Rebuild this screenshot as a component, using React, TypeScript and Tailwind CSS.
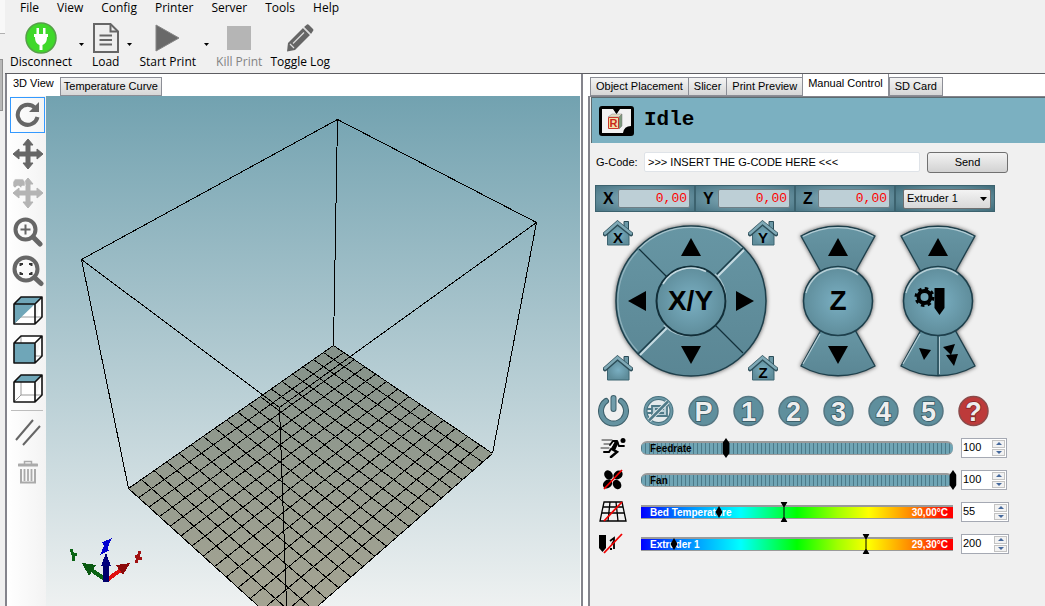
import React, { FC, ReactNode, useState } from "react";

const menus = ["File", "View", "Config", "Printer", "Server", "Tools", "Help"];

const rightTabs = ["Object Placement", "Slicer", "Print Preview", "Manual Control", "SD Card"];

// Corners of the print bed and of the top of the build volume, in viewport pixels
const bed = { back: [287.5, 249.5], right: [446.5, 357.5], front: [241.5, 536.5], left: [82.5, 392.5] };
const top = { back: [291.5, 23.5], right: [490.5, 126.5], front: [233.5, 311.5], left: [35.5, 163.5] };

// Perspective mapping of the unit square to the bed
const project = (u: number, v: number): [number, number] => {
  const [x0, y0] = bed.back;
  const [x1, y1] = bed.right;
  const [x2, y2] = bed.front;
  const [x3, y3] = bed.left;
  const dx1 = x1 - x2, dy1 = y1 - y2;
  const dx2 = x3 - x2, dy2 = y3 - y2;
  const sx = x0 - x1 + x2 - x3, sy = y0 - y1 + y2 - y3;
  const det = dx1 * dy2 - dx2 * dy1;
  const g = (sx * dy2 - dx2 * sy) / det;
  const h = (dx1 * sy - sx * dy1) / det;
  const w = g * u + h * v + 1;
  return [
    ((x1 - x0 + g * x1) * u + (x3 - x0 + h * x3) * v + x0) / w,
    ((y1 - y0 + g * y1) * u + (y3 - y0 + h * y3) * v + y0) / w,
  ];
};

const gridPath = () => {
  const parts: string[] = [];
  for (let i = 0; i <= 14; i++) {
    parts.push(`M${project(i / 14, 0)} L${project(i / 14, 1)}`);
  }
  for (let i = 0; i <= 18; i++) {
    parts.push(`M${project(0, i / 18)} L${project(1, i / 18)}`);
  }
  return parts.join(" ");
};

const Viewport: FC = () => (
  <div className="min-w-0 flex-1 overflow-hidden bg-linear-to-b from-[#72a2b0] to-[#eef1f1]">
    <svg className="block h-[510px] w-full" role="img" aria-label="Build volume">
      <defs>
        <linearGradient id="bedFill" x1="0" y1="0" x2="0" y2="1">
          <stop offset="0" stopColor="#85928a" />
          <stop offset="1" stopColor="#a8a694" />
        </linearGradient>
      </defs>
      <polygon points={`${bed.back} ${bed.right} ${bed.front} ${bed.left}`} fill="url(#bedFill)" />
      <g stroke="#000" fill="none" shapeRendering="crispEdges">
        <path d={gridPath()} />
        <polygon points={`${top.back} ${top.right} ${top.front} ${top.left}`} />
        <path d={`M${top.back} L${bed.back} M${top.right} L${bed.right} M${top.front} L${bed.front} M${top.left} L${bed.left}`} />
      </g>
      {/* Axis marker */}
      <g shapeRendering="crispEdges" strokeWidth="3">
        <path d="M60 484L44 473" stroke="#0a6414" strokeWidth="4" />
        <path d="M36 467L50 469L43 480Z" fill="#0a5a12" />
        <path d="M61 484L76 473" stroke="#e01010" strokeWidth="4" />
        <path d="M84 467L70 469L77 479Z" fill="#8c0a0a" />
        <path d="M60 486V468" stroke="#00006c" strokeWidth="6" />
        <path d="M60 457L65 470H55Z" fill="#00007c" />
        <path d="M25 453L27 459L28 465M31 458L26 460" stroke="#0a6414" fill="none" />
        <path d="M57 448L62 446L58 455L62 453" stroke="#0000d0" fill="none" strokeWidth="4" />
        <path d="M94 455L90 467M89 460L96 463" stroke="#a01010" fill="none" />
      </g>
    </svg>
  </div>
);

const ToolButton: FC<{ label: string; icon: ReactNode; disabled?: boolean; drop?: boolean }> = ({ label, icon, disabled, drop }) => (
  <div className="flex">
    <button disabled={disabled} className={`flex flex-col items-center ${disabled ? "text-[#838383]" : "text-black"}`}>
      <span className="flex h-8 items-center">{icon}</span>
      <span className="leading-4 whitespace-nowrap">{label}</span>
    </button>
    {drop && (
      <button aria-label={`${label} options`} className="flex h-11 w-5 items-center justify-center">
        <svg width="5" height="3"><path d="M0 0H5L2.5 3Z" /></svg>
      </button>
    )}
  </div>
);

const cube = "M1 8H22V28H1Z M1 8L8 1H29L22 8 M29 1V21L22 28";

const CubeIcon: FC<{ fill: string }> = ({ fill }) => (
  <svg width="30" height="29" viewBox="0 0 30 29" fill="none">
    <path d={cube} fill="#fff" />
    <path d="M8 1V21H29 M8 21L1 28" stroke="#999" />
    <path d={fill} fill="#6fa6b8" />
    <path d={cube} stroke="#111" strokeWidth="1.6" strokeLinejoin="round" />
  </svg>
);

const moveArrows = "M15 0L20 6H17V13H24V10L30 15L24 20V17H17V24H20L15 30L10 24H13V17H6V20L0 15L6 10V13H13V6H10Z";

const viewTools: { name: string; icon: ReactNode }[] = [
  {
    name: "Rotate",
    icon: (
      <svg width="26" height="26" viewBox="0 0 26 26">
        <path d="M20.5 6.5A10 10 0 1 0 22.5 15" fill="none" stroke="#666" strokeWidth="4" />
        <path d="M24 0V10H14Z" fill="#666" />
      </svg>
    ),
  },
  { name: "Move camera", icon: <svg width="30" height="30" viewBox="0 0 30 30"><path d={moveArrows} fill="#666" stroke="#666" strokeLinejoin="round" /></svg> },
  {
    name: "Move object",
    icon: (
      <svg width="30" height="30" viewBox="0 0 30 30" fill="#b4b4b4">
        <path d={moveArrows} stroke="#b4b4b4" strokeLinejoin="round" />
        <path d="M0 4L2 1H10L12 4V8H9L8 10L6 8H4L2 10L0 8Z" stroke="#f6f6f6" strokeWidth="0.6" />
      </svg>
    ),
  },
  {
    name: "Zoom",
    icon: (
      <svg width="30" height="30" viewBox="0 0 30 30" fill="none" stroke="#666">
        <circle cx="12.5" cy="12.5" r="10" strokeWidth="4" />
        <path d="M20 20L27 27" strokeWidth="5" strokeLinecap="round" />
        <path d="M12.5 7.5V17.5M7.5 12.5H17.5" strokeWidth="2" />
      </svg>
    ),
  },
  {
    name: "Fit view",
    icon: (
      <svg width="32" height="32" viewBox="0 0 32 32" fill="none" stroke="#666">
        <circle cx="14" cy="14" r="11.5" strokeWidth="4" />
        <path d="M22.5 22.5L29 28.5" strokeWidth="5" strokeLinecap="round" />
        <path d="M8.500 11V9H11M17 9H19.5V11M19.5 17V19H17M11 19H8.5V17" stroke="#333" strokeWidth="2" />
      </svg>
    ),
  },
  { name: "Isometric view", icon: <CubeIcon fill="M1 28V8L8 1H29L22 8Z" /> },
  { name: "Front view", icon: <CubeIcon fill="M1 8H22V28H1Z" /> },
  { name: "Top view", icon: <CubeIcon fill="M1 8L8 1H29L22 8Z" /> },
];

// Shaded teal used by every pad
const PadDefs: FC = () => (
  <svg className="absolute size-0" aria-hidden="true">
    <defs>
      <radialGradient id="hub">
        <stop offset="0" stopColor="#7aafc2" />
        <stop offset="1" stopColor="#5f8d9b" />
      </radialGradient>
      <linearGradient id="rim" x1="0" y1="0" x2="0" y2="1">
        <stop offset="0" stopColor="#6796a4" />
        <stop offset="1" stopColor="#5a8694" />
      </linearGradient>
    </defs>
  </svg>
);

const triangles = {
  up: "M10 0L20 18H0Z",
  down: "M0 0H20L10 18Z",
  left: "M0 10L18 0V20Z",
  right: "M0 0L18 10L0 20Z",
};

const ArrowButton: FC<{ dir: keyof typeof triangles; label: string }> = ({ dir, label }) => (
  <button aria-label={label} className="flex size-10 items-center justify-center">
    <svg width={dir === "up" || dir === "down" ? 20 : 18} height={dir === "up" || dir === "down" ? 18 : 20}>
      <path d={triangles[dir]} />
    </svg>
  </button>
);

const HomeButton: FC<{ axis?: string; place: string }> = ({ axis, place }) => (
  <button aria-label={`Home ${axis ?? "all"}`} className={`absolute ${place}`}>
    <svg width="30" height="27" viewBox="0 0 30 27">
      <path d="M21 9V1.5H25.5V12" fill="#6b98a6" stroke="#2c4d58" />
      <path d="M4.5 13L14.5 5L26 14V25H4.5Z" fill="url(#hub)" stroke="#3d6471" />
      <path d="M2 14L14.5 3L28 14" fill="none" stroke="#2c4d58" strokeWidth="4.5" strokeLinecap="round" />
      <path d="M2 13.5L14.5 2.5L28 13.5" fill="none" stroke="#7fa9b6" strokeWidth="2.5" strokeLinecap="round" />
      <text x="15" y="23" textAnchor="middle" fontSize="15" fontWeight="700">{axis}</text>
    </svg>
  </button>
);

const XYPad: FC = () => (
  <div className="relative flex h-[162px] w-[175px] items-center justify-center">
    <svg width="160" height="160" viewBox="-80 -80 160 160" className="drop-shadow-[0_0_2px_#000a]">
      <circle r="75" fill="url(#rim)" stroke="#1d3f4b" strokeWidth="1.5" />
      <path d="M-52 -52A73.5 73.5 0 0 1 52 -52" fill="none" stroke="#b4cdd5" strokeWidth="1.2" opacity="0.8" />
      <path d="M-53.5 50A73.5 73.5 0 0 1 -53.5 -50" fill="none" stroke="#a3c1ca" strokeWidth="1.2" opacity="0.7" />
      <path d="M-52 -52L-24 -24M24 24L52 52" stroke="#12303a" strokeWidth="1.2" />
      <path d="M53 -51L26 -24M-24 27L-51 54" stroke="#c5dae1" strokeWidth="2" />
      <path d="M52 -53L24 -25M-25 25L-53 53" stroke="#1d3f4b" strokeWidth="1.5" />
      <path d="M24 -27A36 36 0 1 1 -27 24" fill="none" stroke="#a9c5ce" strokeWidth="2" />
      <circle r="34.5" fill="url(#hub)" stroke="#122f39" strokeWidth="2" />
      <path d="M-28 -17A33 33 0 0 1 15 -29.5" fill="none" stroke="#c5dae1" strokeWidth="1.5" />
    </svg>
    <div className="absolute inset-0 m-auto grid size-[162px] grid-cols-3 grid-rows-3 place-items-center">
      <span />
      <ArrowButton dir="up" label="Y plus" />
      <span />
      <ArrowButton dir="left" label="X minus" />
      <span className="text-[28px] leading-none font-bold">X/Y</span>
      <ArrowButton dir="right" label="X plus" />
      <span />
      <ArrowButton dir="down" label="Y minus" />
    </div>
    <HomeButton axis="X" place="top-0 left-0" />
    <HomeButton axis="Y" place="top-0 right-0" />
    <HomeButton place="bottom-0 left-0" />
    <HomeButton axis="Z" place="right-0 bottom-0" />
  </div>
);

const ColumnPad: FC<{ split?: boolean; children: ReactNode }> = ({ split, children }) => (
  <div className="relative flex h-[162px] items-center">
    <svg width="80" height="160" viewBox="-40 -80 80 160" className="drop-shadow-[0_0_2px_#000a]">
      <g fill="url(#rim)" stroke="#1d3f4b" strokeWidth="1.3">
        <path d="M-37 -65A75 75 0 0 1 37 -65L17 -29H-17Z" />
        <path d="M-37 65A75 75 0 0 0 37 65L17 29H-17Z" />
        {split && <path d="M0 34V75" />}
      </g>
      <path d="M-35 -64.5A73.5 73.5 0 0 1 35 -64.5M-18 33L-35 63" fill="none" stroke="#b4cdd5" strokeWidth="1.2" />
      {split && <path d="M1.5 36V73" stroke="#b4cdd5" />}
      <circle r="34.5" fill="url(#hub)" stroke="#1d3f4b" strokeWidth="1.5" />
      <path d="M-32 -8A33 33 0 0 1 20 -26" fill="none" stroke="#b4cdd5" strokeWidth="1.5" />
    </svg>
    <div className="absolute inset-0 grid grid-rows-3 place-items-center">{children}</div>
  </div>
);

const Disc: FC<{ label: string; text?: string; red?: boolean; children?: ReactNode }> = ({ label, text, red, children }) => (
  <button aria-label={label}>
    <svg width="31" height="32" viewBox="0 0 31 32">
      {text && <circle cx="15.5" cy="16" r="14.5" fill={red ? "#bd3a3a" : "#5f8f9d"} stroke={red ? "#8b4a4a" : "#557682"} strokeWidth="1.5" />}
      {text && (
        <text x="15.5" y="25.5" textAnchor="middle" fontSize="27" fontWeight="700" fill="#eee" stroke={red ? "#7c1f1f" : "#33545f"} strokeWidth="1.5" paintOrder="stroke">
          {text}
        </text>
      )}
      {children}
    </svg>
  </button>
);

const redSlash = <path d="M5 20L23 1" stroke="#f00000" strokeWidth="1.8" />;

const rowIcons = {
  run: (
    <svg width="28" height="20" viewBox="0 0 28 20" fill="none" stroke="#000" strokeLinecap="round">
      <circle cx="24" cy="2.500" r="2.5" fill="#000" stroke="none" />
      <path d="M3 2H13M5 6H11M2 10H10" strokeWidth="0.8" />
      <path d="M17.500 4L13 11L18 14L12 19" strokeWidth="2.5" />
      <path d="M17.500 4.500L15 10" strokeWidth="4" />
      <path d="M12 11L10 14H5" strokeWidth="2" />
      <path d="M11 7L14 3H18L20 8H25" strokeWidth="1.8" />
    </svg>
  ),
  fan: (
    <svg width="28" height="22" viewBox="0 0 28 22">
      <ellipse cx="9.5" cy="6" rx="4" ry="5" transform="rotate(-35 9.5 6)" />
      <ellipse cx="19" cy="6" rx="4" ry="5" transform="rotate(50 19 6)" />
      <ellipse cx="8.5" cy="15" rx="4" ry="5" transform="rotate(50 8.5 15)" />
      <ellipse cx="18" cy="15.5" rx="4" ry="5" transform="rotate(-35 18 15.5)" />
      {redSlash}
    </svg>
  ),
  bed: (
    <svg width="28" height="22" viewBox="0 0 28 22" fill="none" stroke="#000" strokeWidth="1.3">
      <path d="M5 1H23L27 20H1ZM4 6H24M3 12H25.5M11 1L9 20M17 1L19 20" />
      {redSlash}
    </svg>
  ),
  extruder: (
    <svg width="28" height="22" viewBox="0 0 28 22">
      <path d="M0 2H7V15L3.5 19L0 15Z" />
      <path d="M11 8L15 5V8L13 11M15 7V16M11 16H13" fill="none" stroke="#000" strokeWidth="1.8" />
      {redSlash}
    </svg>
  ),
};

const Spinner: FC<{ label: string; value: number; wide?: boolean; onChange: (value: number) => void }> = ({ label, value, wide, onChange }) => (
  <div className={`flex h-5 border border-[#a5a9b3] bg-white ${wide ? "w-12" : "w-[46px]"}`}>
    <input
      aria-label={label}
      inputMode="numeric"
      value={value}
      onChange={(e) => onChange(Number(e.target.value) || 0)}
      className="h-4 w-0 flex-1 pl-px text-[11px] leading-4 outline-none"
    />
    <div className="flex w-[15px] flex-col gap-px p-px">
      <button aria-label={`${label} up`} onClick={() => onChange(value + 1)} className="flex flex-1 items-center justify-center border border-[#c3c3c3] bg-[#f2f2f2]">
        <svg width="6" height="3"><path d="M3 0L6 3H0Z" fill="#46699c" /></svg>
      </button>
      <button aria-label={`${label} down`} onClick={() => onChange(value - 1)} className="flex flex-1 items-center justify-center border border-[#c3c3c3] bg-[#f2f2f2]">
        <svg width="6" height="3"><path d="M0 0H6L3 3Z" fill="#46699c" /></svg>
      </button>
    </div>
  </div>
);

type Row = { name: string; icon: keyof typeof rowIcons; min: number; max: number; current?: number; reading?: string };

const rows: Row[] = [
  { name: "Feedrate", icon: "run", min: 25, max: 300 },
  { name: "Fan", icon: "fan", min: 0, max: 100 },
  { name: "Bed Temperature", icon: "bed", min: 0, max: 120, current: 30, reading: "30,00°C" },
  { name: "Extruder 1", icon: "extruder", min: 0, max: 277, current: 29.3, reading: "29,30°C" },
];

const SliderRow: FC<{ row: Row; value: number; onChange: (value: number) => void }> = ({ row, value, onChange }) => {
  const percent = (n: number) => `${((n - row.min) / (row.max - row.min)) * 100}%`;
  const heated = row.current !== undefined;

  return (
    <div className="flex h-8 items-center">
      <span className="flex w-[42px] shrink-0 items-center">{rowIcons[row.icon]}</span>
      <div className="relative w-[312px]">
        <div
          className={`flex h-[14px] items-center justify-between border-t-2 border-b border-[#9a9a9a] px-[9px] text-[10px] leading-3 font-bold ${
            heated
              ? "bg-[linear-gradient(90deg,#0000ff_0%,#0078ff_12%,#00ffff_32%,#00ff00_50%,#a0ff00_63%,#ffff00_73%,#ff8c00_86%,#ff0000_98%)] text-white"
              : "rounded-md bg-[#70a5b5] bg-[repeating-linear-gradient(90deg,#4b7988_0px,#4b7988_1px,transparent_1px,transparent_4px)] text-black"
          }`}
        >
          <label htmlFor={row.icon}>{row.name}</label>
          <span className="-mr-1">{row.reading}</span>
        </div>
        {heated ? (
          <>
            <svg width="7" height="12" className="absolute top-px -translate-x-1/2" style={{ left: percent(row.current!) }}>
              <path d="M3.5 0L7 6L3.5 12L0 6Z" />
            </svg>
            <svg width="7" height="20" className="absolute -top-[3px] -translate-x-1/2" style={{ left: percent(value) }}>
              <path d="M0 0H7L4 5V15L7 20H0L3 15V5Z" />
            </svg>
          </>
        ) : (
          <svg width="7" height="20" className="absolute -top-[3px] -translate-x-1/2" style={{ left: percent(value) }}>
            <path d="M3.5 0L7 5V15L3.5 20L0 15V5Z" />
          </svg>
        )}
        <input
          id={row.icon}
          type="range"
          min={row.min}
          max={row.max}
          value={value}
          onChange={(e) => onChange(Number(e.target.value))}
          className="absolute inset-0 h-full w-full opacity-0"
        />
      </div>
      <div className="ml-2">
        <Spinner label={row.name} value={value} wide={heated} onChange={onChange} />
      </div>
    </div>
  );
};

const tabBase = "border border-[#8c8e96] text-[11px] whitespace-nowrap";

const App: FC = () => {
  const [tab, setTab] = useState("Manual Control");
  const [tool, setTool] = useState("Rotate");
  const [gcode, setGcode] = useState(">>> INSERT THE G-CODE HERE <<<");
  const [values, setValues] = useState([100, 100, 55, 200]);

  const setValue = (index: number, value: number) => {
    setValues((prev) => prev.map((v, i) => (i === index ? value : v)));
  };

  return (
    <div className="flex h-screen overflow-hidden bg-[#f0f0f0] font-['Liberation_Sans',Arial,sans-serif] text-black">
      {/* Edge of the window frame */}
      <div className="flex w-[5px] shrink-0 flex-col">
        <div className="h-[34px] border-b border-[#b0b0b0] bg-[#f8f8f8]" />
        <div className="mt-[25px] mr-0.5 h-[52px] border border-l-0 border-[#909090] bg-[#b8b8b8]" />
      </div>

      <div className="flex min-w-0 flex-1 flex-col">
        <nav className="flex h-4 shrink-0 gap-[18px] pl-[15px] font-['Open_Sans',sans-serif] text-[12px] leading-[14px]">
          {menus.map((menu) => (
            <button key={menu}>{menu}</button>
          ))}
        </nav>

        {/* Main toolbar */}
        <div className="flex h-[57px] shrink-0 items-start pt-[6px] pl-[5px] font-['Open_Sans',sans-serif] text-[12px]">
          <ToolButton
            label="Disconnect"
            drop
            icon={
              <svg width="32" height="32" viewBox="0 0 32 32">
                <circle cx="16" cy="16" r="15" fill="#3fd82a" stroke="#55a048" strokeWidth="1.5" />
                <path d="M9 12H23V15H22C22 20 20 22 17.5 23V28H14.5V23C12 22 10 20 10 15H9ZM11.5 6H14V12H11.5ZM18 6H20.5V12H18Z" fill="#fff" />
              </svg>
            }
          />
          <ToolButton
            label="Load"
            drop
            icon={
              <svg width="26" height="30" viewBox="0 0 26 30" fill="none" stroke="#666" strokeWidth="2">
                <path d="M1 1H17.5L25 8.5V29H1Z" fill="#eee" />
                <path d="M17.5 1V8.5H25M6.5 12.5H19M6.5 17H19M6.5 21.5H19" />
              </svg>
            }
          />
          <ToolButton label="Start Print" drop icon={<svg width="25" height="28"><path d="M1 1L24 14L1 27Z" fill="#696969" stroke="#858585" /></svg>} />
          <ToolButton label="Kill Print" disabled icon={<svg width="24" height="24"><path d="M0 0H24V24H0Z" fill="#b5b5b5" /></svg>} />
          <div className="ml-2">
            <ToolButton
              label="Toggle Log"
              icon={
                <svg width="28" height="28" viewBox="0 0 28 28" fill="#666">
                  <path d="M18 3L21 0.5Q22 0 23 1L27 5Q28 6 27 7L25 10Z" />
                  <path d="M17 4L24 11L9 26L1 27.5L2 19Z" />
                  <path d="M7 19.500L18 8.500" stroke="#ddd" strokeWidth="1.2" />
                  <path d="M17.500 3.500L24.500 10.500M4 20L8 24" stroke="#ddd" strokeWidth="1.2" />
                </svg>
              }
            />
          </div>
        </div>

        <main className="grid min-h-0 flex-1 grid-cols-[minmax(0,578fr)_minmax(0,457fr)] gap-x-[5px] border-t border-[#5d5d62] bg-white">
          {/* 3D view */}
          <section className="flex min-h-0 min-w-0 flex-col border-r-2 border-l-2 border-[#84848c] bg-white">
            <div className="flex h-[22px] shrink-0 items-end">
              <button className="h-full px-1.5 pb-1 text-[11px]">3D View</button>
              <button className={`${tabBase} h-[19px] bg-linear-to-b from-[#f4f4f4] to-[#d6d6d6] px-[3px]`}>Temperature Curve</button>
            </div>
            <div className="flex min-h-0 flex-1 pr-px">
              <div className="flex w-[39px] shrink-0 flex-col items-end gap-[3px] bg-linear-to-r from-white to-[#f3f3f3] pt-px pr-px">
                {viewTools.map((item) => (
                  <button
                    key={item.name}
                    aria-label={item.name}
                    onClick={() => setTool(item.name)}
                    className={`flex h-9 w-[35px] shrink-0 items-center justify-center ${tool === item.name ? "border border-[#3399ff]" : ""}`}
                  >
                    {item.icon}
                  </button>
                ))}
                <hr className="my-px mr-0.5 w-8 border-[#bdbdbd]" />
                <button aria-label="Parallel projection" className="flex h-9 w-[35px] shrink-0 items-center justify-center">
                  <svg width="26" height="28"><path d="M1 21L18 1M8 26L25 7" stroke="#666" strokeWidth="2" /></svg>
                </button>
                <button aria-label="Delete" className="flex h-9 w-[35px] shrink-0 items-center justify-center">
                  <svg width="20" height="24" viewBox="0 0 20 24" fill="none" stroke="#aaa">
                    <path d="M1 5H19" strokeWidth="3" strokeLinecap="round" />
                    <path d="M6.5 4V1.5H13.5V4" strokeWidth="1.5" />
                    <path d="M3 9V22.5H17V9" strokeWidth="2" />
                    <path d="M6.5 9V21M10 9V21M13.5 9V21" strokeWidth="1.8" />
                  </svg>
                </button>
              </div>
              <Viewport />
            </div>
          </section>

          {/* Manual control */}
          <section className="flex min-h-0 min-w-0 flex-col">
            <div className="flex h-[22px] shrink-0 items-end pl-0.5">
              {rightTabs.map((name) => (
                <button
                  key={name}
                  onClick={() => setTab(name)}
                  className={
                    tab === name
                      ? `${tabBase} h-[22px] border-y-0 bg-white px-[5px] pb-1`
                      : `${tabBase} -mr-px h-[19px] bg-linear-to-b from-[#f4f4f4] to-[#d6d6d6] px-[5px]`
                  }
                >
                  {name}
                </button>
              ))}
            </div>

            <div className="flex min-h-0 flex-1 flex-col border-t border-l-2 border-[#84848c] bg-[#f0f0f0] pl-px">
              <header className="flex h-[46px] shrink-0 items-center gap-[10px] border-t border-l border-[#5c6b70] bg-[#7bb0c1] pl-[7px]">
                <svg width="35" height="30" viewBox="0 0 35 30">
                  <rect width="35" height="30" rx="3" />
                  <path d="M3 3H14L17.5 8L21 3H32V20Q25 20 24 27H3Z" fill="#f2f2f2" />
                  <path d="M14 2H21L17.5 8Z" />
                  <path d="M9 11L13 8H23L20 11Z" fill="#e3dcc4" stroke="#888" strokeWidth="0.5" />
                  <path d="M20 11L23 8V20L20 23Z" fill="#7d9a7d" stroke="#777" strokeWidth="0.5" />
                  <path d="M9.5 11.5H19.5V22.5H9.5Z" fill="#f3dfa8" stroke="#c8382c" />
                  <text x="14.5" y="21" textAnchor="middle" fontSize="11" fontWeight="700" fill="#c8281c">R</text>
                </svg>
                <h1 className="pb-0.5 font-['Liberation_Mono',monospace] text-[21px] leading-none font-bold">Idle</h1>
              </header>

              <form className="mb-1 flex h-[38px] shrink-0 items-center pl-[5px] text-[11px]" onSubmit={(e) => e.preventDefault()}>
                <label htmlFor="gcode" className="w-12">G-Code:</label>
                <input
                  id="gcode"
                  value={gcode}
                  onChange={(e) => setGcode(e.target.value)}
                  className="h-5 w-[276px] rounded-xs border border-[#dfe3e8] bg-white px-[3px] outline-none"
                />
                <button type="submit" className="ml-[7px] h-[21px] w-[81px] rounded-[3px] border border-[#707070] bg-linear-to-b from-[#f3f3f3] to-[#d2d2d2]">
                  Send
                </button>
              </form>

              {/* Coordinates */}
              <div className="ml-1 flex h-[27px] w-[400px] shrink-0">
                {["X", "Y", "Z"].map((axis) => (
                  <div key={axis} className="flex w-[100px] items-center justify-between border border-[#3c626e] bg-radial from-[#8bb5c2] to-[#4a7584] pr-1 pl-[7px]">
                    <label htmlFor={`pos${axis}`} className="text-[16px] leading-none font-bold">{axis}</label>
                    <input
                      id={`pos${axis}`}
                      readOnly
                      defaultValue="0,00"
                      className="h-[19px] w-[72px] rounded-xs border border-[#6f7f86] bg-[#bdcfd6] px-0.5 text-right font-['Liberation_Mono',monospace] text-[13px] text-[#ff0000] outline-none"
                    />
                  </div>
                ))}
                <div className="flex w-[100px] items-center border border-[#3c626e] bg-radial from-[#8bb5c2] to-[#3f6b79] pl-[7px]">
                  <div className="relative">
                    <select aria-label="Extruder" className="block h-5 w-[88px] appearance-none rounded-xs border border-[#707070] bg-linear-to-b from-[#f3f3f3] to-[#d8d8d8] pl-[3px] text-[11px] outline-none">
                      <option>Extruder 1</option>
                    </select>
                    <svg width="7" height="4" className="pointer-events-none absolute top-2 right-1"><path d="M0 0H7L3.5 4Z" /></svg>
                  </div>
                </div>
              </div>

              {/* Jog pads */}
              <div className="mt-2 flex shrink-0 pl-3">
                <PadDefs />
                <XYPad />
                <div className="ml-5 flex gap-5">
                  <ColumnPad>
                    <ArrowButton dir="up" label="Z plus" />
                    <span className="text-[28px] leading-none font-bold">Z</span>
                    <ArrowButton dir="down" label="Z minus" />
                  </ColumnPad>
                  <ColumnPad split>
                    <ArrowButton dir="up" label="Retract" />
                    <svg width="52" height="30" viewBox="-26 -15 52 30">
                      <circle cx="-13.5" cy="-4" r="6" fill="none" stroke="#000" strokeWidth="4" />
                      <circle cx="-13.5" cy="-4" r="8.5" fill="none" stroke="#000" strokeWidth="3" strokeDasharray="3.4 3.276" />
                      <path d="M-3.5 -13H6.5V7L1.5 14L-3.5 7Z" />
                    </svg>
                    <div className="flex gap-3">
                      <button aria-label="Extrude"><svg width="12" height="24"><path d="M0 5L12 7L5 17Z" /></svg></button>
                      <button aria-label="Extrude fast"><svg width="15" height="24"><path d="M0 4L12 1L8 12ZM3 12L15 11L11 23Z" /></svg></button>
                    </div>
                  </ColumnPad>
                </div>
              </div>

              {/* Quick actions */}
              <div className="mt-[13px] flex shrink-0 gap-[14px] pl-[7px]">
                <Disc label="Power">
                  <path d="M8 6A12.5 12.5 0 1 0 23 6" fill="none" stroke="#3d5f6a" strokeWidth="6" strokeLinecap="round" />
                  <path d="M8 6A12.5 12.5 0 1 0 23 6" fill="none" stroke="#6593a1" strokeWidth="4" strokeLinecap="round" />
                  <path d="M15.5 3V14" stroke="#3d5f6a" strokeWidth="6" strokeLinecap="round" />
                  <path d="M15.5 3V14" stroke="#719dab" strokeWidth="4" strokeLinecap="round" />
                </Disc>
                <Disc label="Motors off">
                  <circle cx="15.5" cy="16" r="13" fill="#e4eaec" stroke="#47717e" strokeWidth="4" />
                  <circle cx="15.5" cy="16" r="13" fill="none" stroke="#6b98a6" strokeWidth="2" />
                  <path d="M9 11H24V21H9ZM4 14H9M4 18H9M12 14H21M12 18H21" fill="#b7ced6" stroke="#4e7a88" strokeWidth="1.8" />
                  <path d="M6 25.5L25 6.5" stroke="#e4eaec" strokeWidth="4.500" />
                  <path d="M6 25.5L25 6.5" stroke="#4e7a88" strokeWidth="2.5" />
                </Disc>
                {["P", "1", "2", "3", "4", "5"].map((text) => (
                  <Disc key={text} label={`Script ${text}`} text={text} />
                ))}
                <Disc label="Help" text="?" red />
              </div>

              <div className="mt-[5px] pl-2">
                {rows.map((row, i) => (
                  <SliderRow key={row.name} row={row} value={values[i]} onChange={(value) => setValue(i, value)} />
                ))}
              </div>
            </div>
          </section>
        </main>
      </div>
    </div>
  );
};

export default App;
